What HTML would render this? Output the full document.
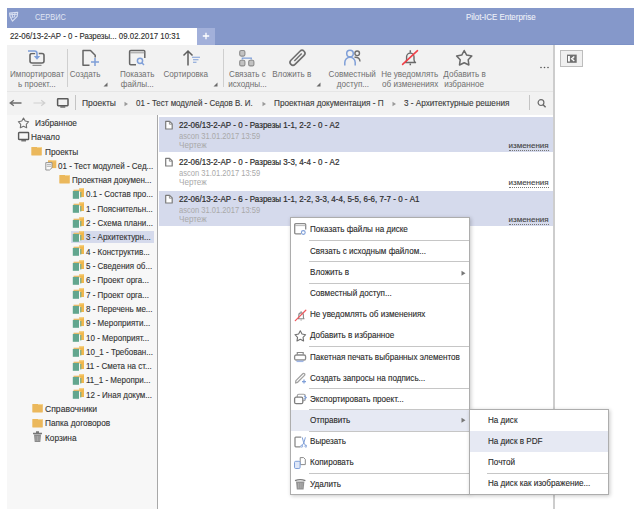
<!DOCTYPE html>
<html><head><meta charset="utf-8"><style>
html,body{margin:0;padding:0;}
body{width:639px;height:516px;overflow:hidden;position:relative;background:#fff;font-family:"Liberation Sans", sans-serif;font-size:9px;}
.r{position:absolute;display:block;}
.t{position:absolute;white-space:nowrap;transform-origin:0 50%;}
.c{position:absolute;white-space:nowrap;text-align:center;line-height:13px;font-size:9px;}
</style></head><body>
<div class="r" style="left:7px;top:8px;width:627px;height:37px;background:#8598ca;"></div>
<svg class="r" style="left:8px;top:11px;" width="12" height="12" viewBox="0 0 12 12"><path d="M1.6 2.1 L9.7 1.3 L9.2 5.3 L4.5 10.2 L2 5.2 Z" fill="none" stroke="#d9e0f2" stroke-width="1.1" stroke-linejoin="round"/><path d="M2 3.8 L9.4 3.2 M4 2 L4.6 6.5 M7 1.6 L6.6 6" stroke="#d9e0f2" stroke-width="1"/><path d="M3.2 6.3 L6.8 6" stroke="#d9e0f2" stroke-width=".8"/></svg>
<div class="t" style="left:35px;top:10.50px;font-size:8.5px;line-height:12px;color:#e0e6f4;font-weight:normal;transform:scaleX(0.87);">СЕРВИС</div>
<div class="t" style="left:465.7px;top:10.70px;font-size:9px;line-height:12px;color:#eef1f9;font-weight:normal;transform:scaleX(0.88);-webkit-text-stroke:0.1px #eef1f9;">Pilot-ICE Enterprise</div>
<div class="r" style="left:7px;top:28px;width:190px;height:17px;background:#ffffff;"></div>
<div class="t" style="left:9.7px;top:30.00px;font-size:9px;line-height:12px;color:#2b2b2b;font-weight:normal;transform:scaleX(0.873);-webkit-text-stroke:0.12px #2b2b2b;">22-06/13-2-АР - 0 - Разрезы... 09.02.2017 10:31</div>
<div class="r" style="left:215px;top:44px;width:419px;height:1px;background:#7d92c6;"></div>
<div class="r" style="left:197px;top:28px;width:18px;height:17px;background:#a2b0da;"></div>
<svg class="r" style="left:201px;top:31px;" width="10" height="10" viewBox="0 0 10 10"><path d="M5 1.8 V8.2 M1.8 5 H8.2" stroke="#fff" stroke-width="1.3"/></svg>
<div class="r" style="left:7px;top:45px;width:546px;height:46px;background:#f2f2f2;"></div>
<div class="r" style="left:7px;top:91px;width:546px;height:23.5px;background:#f2f2f2;border-top:1px solid #e6e6e6;box-sizing:border-box;"></div>
<div class="r" style="left:66.5px;top:48.5px;width:1px;height:38px;background:#cfcfcf;"></div>
<div class="r" style="left:222.5px;top:48.5px;width:1px;height:38px;background:#cfcfcf;"></div>
<div class="c" style="left:-23px;top:67.50px;width:120px;color:#707070"><span style="display:inline-block;transform:scaleX(.9)">Импортироват</span></div>
<div class="c" style="left:-23px;top:77.50px;width:120px;color:#707070"><span style="display:inline-block;transform:scaleX(.9)">ь проект...</span></div>
<div class="c" style="left:25px;top:67.50px;width:120px;color:#707070"><span style="display:inline-block;transform:scaleX(.9)">Создать</span></div>
<div class="c" style="left:77px;top:67.50px;width:120px;color:#707070"><span style="display:inline-block;transform:scaleX(.9)">Показать</span></div>
<div class="c" style="left:77px;top:77.50px;width:120px;color:#707070"><span style="display:inline-block;transform:scaleX(.9)">файлы...</span></div>
<div class="c" style="left:126px;top:67.50px;width:120px;color:#707070"><span style="display:inline-block;transform:scaleX(.9)">Сортировка</span></div>
<div class="c" style="left:187px;top:67.50px;width:120px;color:#707070"><span style="display:inline-block;transform:scaleX(.9)">Связать с</span></div>
<div class="c" style="left:187px;top:77.50px;width:120px;color:#707070"><span style="display:inline-block;transform:scaleX(.9)">исходны...</span></div>
<div class="c" style="left:232px;top:67.50px;width:120px;color:#707070"><span style="display:inline-block;transform:scaleX(.9)">Вложить в</span></div>
<div class="c" style="left:292.5px;top:67.50px;width:120px;color:#707070"><span style="display:inline-block;transform:scaleX(.9)">Совместный</span></div>
<div class="c" style="left:292.5px;top:77.50px;width:120px;color:#707070"><span style="display:inline-block;transform:scaleX(.9)">доступ...</span></div>
<div class="c" style="left:350px;top:67.50px;width:120px;color:#707070"><span style="display:inline-block;transform:scaleX(.9)">Не уведомлять</span></div>
<div class="c" style="left:350px;top:77.50px;width:120px;color:#707070"><span style="display:inline-block;transform:scaleX(.9)">об изменениях</span></div>
<div class="c" style="left:404.5px;top:67.50px;width:120px;color:#707070"><span style="display:inline-block;transform:scaleX(.9)">Добавить в</span></div>
<div class="c" style="left:404.5px;top:77.50px;width:120px;color:#707070"><span style="display:inline-block;transform:scaleX(.9)">избранное</span></div>
<svg class="r" style="left:102.5px;top:81.5px;" width="5" height="5" viewBox="0 0 5 5"><path d="M4.5 0.5 V4.5 H0.5 Z" fill="#6a6a6a"/></svg>
<svg class="r" style="left:212.5px;top:81.5px;" width="5" height="5" viewBox="0 0 5 5"><path d="M4.5 0.5 V4.5 H0.5 Z" fill="#6a6a6a"/></svg>
<svg class="r" style="left:315.5px;top:81.5px;" width="5" height="5" viewBox="0 0 5 5"><path d="M4.5 0.5 V4.5 H0.5 Z" fill="#6a6a6a"/></svg>
<svg class="r" style="left:540px;top:66px;" width="9" height="3" viewBox="0 0 9 3"><circle cx="1" cy="1.5" r=".8" fill="#555"/><circle cx="4.5" cy="1.5" r=".8" fill="#555"/><circle cx="8" cy="1.5" r=".8" fill="#555"/></svg>
<svg class="r" style="left:27px;top:49px;" width="20" height="18" viewBox="0 0 20 18"><rect x="3" y="4.5" width="14" height="9.5" rx="2" fill="none" stroke="#666" stroke-width="1.6"/><path d="M5.5 16.3 H14.5" stroke="#777" stroke-width="1"/><path d="M1 2 H7.5 Q10 2 10 4.5 V8" fill="none" stroke="#f2f2f2" stroke-width="3.6"/><path d="M1 2 H7.5 Q10 2 10 4.5 V8" fill="none" stroke="#7f9fd8" stroke-width="1.6"/><path d="M6.8 7 L10 10.8 L13.2 7 Z" fill="#7f9fd8"/></svg>
<svg class="r" style="left:81px;top:49px;" width="19" height="18" viewBox="0 0 19 18"><path d="M8.5 16.2 H2 V1.5 H9.5 L14.2 6.2 V8.5" fill="none" stroke="#666" stroke-width="1.5" stroke-linejoin="round"/><path d="M14 9 V17 M10 13 H18" stroke="#7f9fd8" stroke-width="1.5"/></svg>
<svg class="r" style="left:127px;top:49px;" width="20" height="18" viewBox="0 0 20 18"><path d="M9 15.7 H3.8 Q2.6 15.7 2.6 14.5 V2.6 Q2.6 1.6 3.8 1.6 H16.8 Q17.8 1.6 17.8 2.6 V9" fill="none" stroke="#666" stroke-width="1.5"/><path d="M3 3.8 H17.5" stroke="#999" stroke-width="1"/><circle cx="13" cy="11.8" r="2.6" fill="none" stroke="#7f9fd8" stroke-width="1.5"/><path d="M14.8 13.8 L17 16" stroke="#7f9fd8" stroke-width="1.5"/></svg>
<svg class="r" style="left:180px;top:49px;" width="22" height="18" viewBox="0 0 22 18"><path d="M8 16.5 V2 M3.5 6.5 L8 2 L12.5 6.5" fill="none" stroke="#5f5f5f" stroke-width="1.5"/><path d="M12 8.3 H20 M13 10.8 H18.5 M13 13.3 H16.5" stroke="#7f9fd8" stroke-width="1.1"/></svg>
<svg class="r" style="left:237px;top:48px;" width="20" height="20" viewBox="0 0 20 20"><rect x="2.7" y="2.5" width="5.2" height="5.6" rx="1.5" fill="#c2c2c2" stroke="#8c8c8c" stroke-width="1.1"/><rect x="2.7" y="12.3" width="5.2" height="5.6" rx="1.5" fill="#c2c2c2" stroke="#8c8c8c" stroke-width="1.1"/><rect x="11.7" y="12.3" width="5.2" height="5.6" rx="1.5" fill="#c2c2c2" stroke="#8c8c8c" stroke-width="1.1"/><path d="M5.3 10.2 H14.3 M5.3 9.5 V11.5 M14.3 9.5 V11.5" fill="none" stroke="#7f9fd8" stroke-width="1.2"/></svg>
<svg class="r" style="left:285px;top:46px;" width="25" height="24" viewBox="0 0 25 24"><g transform="translate(12.5,11.8) rotate(45)"><rect x="-2.9" y="-9.3" width="5.8" height="18.6" rx="2.9" fill="none" stroke="#6e6e6e" stroke-width="1.6"/><path d="M0 -6 V4.5" stroke="#6e6e6e" stroke-width="1.4"/></g></svg>
<svg class="r" style="left:338px;top:46px;" width="30" height="24" viewBox="0 0 30 24"><circle cx="12" cy="7.5" r="3.3" fill="none" stroke="#7f9fd8" stroke-width="1.5"/><path d="M6.8 19.5 V16.5 A5.2 5.2 0 0 1 17.2 16.5 V19.5" fill="none" stroke="#7f9fd8" stroke-width="1.5"/><circle cx="19.2" cy="7.3" r="2.3" fill="none" stroke="#6e6e6e" stroke-width="1.4"/><path d="M16.5 11.3 C20 11 22 12.5 22 15.5" fill="none" stroke="#6e6e6e" stroke-width="1.4"/></svg>
<svg class="r" style="left:398px;top:46px;" width="24" height="24" viewBox="0 0 24 24"><path d="M7.5 16.5 Q8.6 15.5 8.6 13.5 V10.8 A3.7 3.7 0 0 1 16 10.8 V13.5 Q16 15.5 17.5 16.5 Z" fill="none" stroke="#6a6a6a" stroke-width="1.4" stroke-linejoin="round"/><path d="M12.3 4.3 V6.8 M12.3 17.5 V19.2" stroke="#6a6a6a" stroke-width="1.5"/><path d="M4.6 18.4 L19.5 4.7" stroke="#f04048" stroke-width="1.6" stroke-linecap="round"/></svg>
<svg class="r" style="left:453px;top:48px;" width="22" height="20" viewBox="0 0 22 20"><polygon points="11.20,2.50 13.67,7.10 18.81,8.03 15.19,11.80 15.90,16.97 11.20,14.70 6.50,16.97 7.21,11.80 3.59,8.03 8.73,7.10" fill="none" stroke="#6a6a6a" stroke-width="1.5" stroke-linejoin="round"/></svg>
<div class="r" style="left:553px;top:45px;width:1.5px;height:464px;background:#cdcdcd;"></div>
<div class="r" style="left:560px;top:50px;width:23px;height:17px;background:#f0f0f0;border:1px solid #bdbdbd;box-sizing:border-box;"></div>
<svg class="r" style="left:566px;top:53.5px;" width="12" height="10" viewBox="0 0 12 10"><rect x="1" y="0.6" width="9.7" height="8.2" fill="#707070"/><rect x="2" y="2" width="1.9" height="5.5" fill="#fff"/><path d="M8.3 2.4 L5.6 4.7 L8.3 7" stroke="#fff" stroke-width="1.3" fill="none"/><path d="M6 4.7 H7.5" stroke="#ddd" stroke-width="1"/></svg>
<svg class="r" style="left:9px;top:97px;" width="14" height="12" viewBox="0 0 14 12"><path d="M1.2 6 H12.5 M4.8 3.3 L1.2 6 L4.8 8.7" fill="none" stroke="#6e6e6e" stroke-width="1.3"/></svg>
<svg class="r" style="left:32px;top:97px;" width="14" height="12" viewBox="0 0 14 12"><path d="M1.5 6 H12.8 M9.2 3.3 L12.8 6 L9.2 8.7" fill="none" stroke="#d0d0d0" stroke-width="1.2"/></svg>
<svg class="r" style="left:56px;top:96px;" width="14" height="13" viewBox="0 0 14 13"><rect x="1.6" y="2.7" width="10.4" height="7" rx=".6" fill="none" stroke="#5a5a5a" stroke-width="1.5"/><path d="M4.3 11 H9.3" stroke="#5a5a5a" stroke-width="1.3"/></svg>
<div class="r" style="left:75px;top:94.5px;width:1px;height:15.5px;background:#c4c4c4;"></div>
<div class="t" style="left:81.7px;top:96.50px;font-size:9px;line-height:12px;color:#3a3a3a;font-weight:normal;transform:scaleX(0.94);-webkit-text-stroke:0.12px #3a3a3a;">Проекты</div>
<div class="t" style="left:136px;top:96.50px;font-size:9px;line-height:12px;color:#3a3a3a;font-weight:normal;transform:scaleX(0.885);-webkit-text-stroke:0.12px #3a3a3a;">01 - Тест модулей - Седов В. И.</div>
<div class="t" style="left:273.7px;top:96.50px;font-size:9px;line-height:12px;color:#3a3a3a;font-weight:normal;transform:scaleX(0.91);-webkit-text-stroke:0.12px #3a3a3a;">Проектная документация - П</div>
<div class="t" style="left:404.4px;top:96.50px;font-size:9px;line-height:12px;color:#3a3a3a;font-weight:normal;transform:scaleX(0.907);-webkit-text-stroke:0.12px #3a3a3a;">3 - Архитектурные решения</div>
<svg class="r" style="left:123.5px;top:100.5px;" width="5" height="6" viewBox="0 0 5 6"><path d="M0.5 0.8 L4 3 L0.5 5.2 Z" fill="#999"/></svg>
<svg class="r" style="left:261.5px;top:100.5px;" width="5" height="6" viewBox="0 0 5 6"><path d="M0.5 0.8 L4 3 L0.5 5.2 Z" fill="#999"/></svg>
<svg class="r" style="left:391.5px;top:100.5px;" width="5" height="6" viewBox="0 0 5 6"><path d="M0.5 0.8 L4 3 L0.5 5.2 Z" fill="#999"/></svg>
<div class="r" style="left:529px;top:95px;width:1px;height:15px;background:#c4c4c4;"></div>
<svg class="r" style="left:536px;top:98px;" width="12" height="10" viewBox="0 0 12 10"><circle cx="5" cy="4.6" r="2.9" fill="none" stroke="#6a6a6a" stroke-width="1.2"/><path d="M7.1 6.7 L9.6 9.2" stroke="#6a6a6a" stroke-width="1.5"/></svg>
<div class="r" style="left:7px;top:114.5px;width:150px;height:394.5px;background:#f7f7f7;"></div>
<div class="r" style="left:157px;top:114.5px;width:1px;height:394.5px;background:#a8a8a8;"></div>
<svg class="r" style="left:17px;top:116.6px;" width="13" height="12" viewBox="0 0 13 12"><polygon points="6.50,1.00 8.20,4.05 11.64,4.73 9.26,7.30 9.67,10.77 6.50,9.30 3.33,10.77 3.74,7.30 1.36,4.73 4.80,4.05" fill="none" stroke="#707070" stroke-width="1.1" stroke-linejoin="round"/></svg>
<div class="t" style="left:35px;top:116.90px;font-size:9px;line-height:12px;color:#333;font-weight:normal;transform:scaleX(0.92);-webkit-text-stroke:0.12px #333;">Избранное</div>
<svg class="r" style="left:17px;top:130.91px;" width="13" height="12" viewBox="0 0 13 12"><rect x="1.6" y="1.5" width="10" height="7" rx=".6" fill="none" stroke="#5a5a5a" stroke-width="1.4"/><path d="M4.3 9.8 H9" stroke="#5a5a5a" stroke-width="1.2"/></svg>
<div class="t" style="left:31px;top:131.21px;font-size:9px;line-height:12px;color:#333;font-weight:normal;transform:scaleX(0.92);-webkit-text-stroke:0.12px #333;">Начало</div>
<svg class="r" style="left:31px;top:145.72px;" width="12" height="10" viewBox="0 0 12 10"><rect x="0.3" y="1" width="10.5" height="8.4" rx=".4" fill="#ebb85c"/><rect x="6" y="1" width="4.5" height="0.9" fill="#f8d896"/></svg>
<div class="t" style="left:45px;top:145.52px;font-size:9px;line-height:12px;color:#333;font-weight:normal;transform:scaleX(0.92);-webkit-text-stroke:0.12px #333;">Проекты</div>
<svg class="r" style="left:45px;top:158.53px;" width="13" height="13" viewBox="0 0 13 13"><rect x="3" y="1.3" width="8.3" height="7.8" fill="#ebb85c"/><rect x="6.5" y="1.3" width="4.3" height="0.9" fill="#f8d896"/><path d="M0.8 3.6 H7 V8.8 L4.5 11 H0.8 Z" fill="#fafafa" stroke="#8a8a8a" stroke-width="0.9"/><path d="M1.8 5.6 H6 M1.8 7.3 H6" stroke="#a8a8a8" stroke-width="0.9"/></svg>
<div class="t" style="left:58.4px;top:159.83px;font-size:9px;line-height:12px;color:#333;font-weight:normal;transform:scaleX(0.89);-webkit-text-stroke:0.12px #333;">01 - Тест модулей - Сед...</div>
<svg class="r" style="left:58.8px;top:174.34px;" width="12" height="10" viewBox="0 0 12 10"><rect x="0.3" y="1" width="10.5" height="8.4" rx=".4" fill="#ebb85c"/><rect x="6" y="1" width="4.5" height="0.9" fill="#f8d896"/></svg>
<div class="t" style="left:72.3px;top:174.14px;font-size:9px;line-height:12px;color:#333;font-weight:normal;transform:scaleX(0.89);-webkit-text-stroke:0.12px #333;">Проектная докумен...</div>
<svg class="r" style="left:72px;top:187.14999999999998px;" width="14" height="14" viewBox="0 0 14 14"><rect x="7.3" y="1.2" width="4.7" height="8.8" fill="#f0b84e"/><rect x="8" y="1.3" width="3.5" height="1" fill="#f8d68e"/><rect x="1.5" y="2.7" width="6" height="1.5" fill="#e6bb6a"/><rect x="0.8" y="4" width="6.2" height="7.8" fill="#62a68e"/><rect x="7" y="4.5" width="1.3" height="6.5" fill="#f4f8f6"/><rect x="8.3" y="5" width="1" height="5.5" fill="#62a68e"/></svg>
<div class="t" style="left:86.3px;top:188.45px;font-size:9px;line-height:12px;color:#333;font-weight:normal;transform:scaleX(0.89);-webkit-text-stroke:0.12px #333;">0.1 - Состав про...</div>
<svg class="r" style="left:72px;top:201.45999999999998px;" width="14" height="14" viewBox="0 0 14 14"><rect x="7.3" y="1.2" width="4.7" height="8.8" fill="#f0b84e"/><rect x="8" y="1.3" width="3.5" height="1" fill="#f8d68e"/><rect x="1.5" y="2.7" width="6" height="1.5" fill="#e6bb6a"/><rect x="0.8" y="4" width="6.2" height="7.8" fill="#62a68e"/><rect x="7" y="4.5" width="1.3" height="6.5" fill="#f4f8f6"/><rect x="8.3" y="5" width="1" height="5.5" fill="#62a68e"/></svg>
<div class="t" style="left:86.3px;top:202.76px;font-size:9px;line-height:12px;color:#333;font-weight:normal;transform:scaleX(0.89);-webkit-text-stroke:0.12px #333;">1 - Пояснительн...</div>
<svg class="r" style="left:72px;top:215.76999999999998px;" width="14" height="14" viewBox="0 0 14 14"><rect x="7.3" y="1.2" width="4.7" height="8.8" fill="#f0b84e"/><rect x="8" y="1.3" width="3.5" height="1" fill="#f8d68e"/><rect x="1.5" y="2.7" width="6" height="1.5" fill="#e6bb6a"/><rect x="0.8" y="4" width="6.2" height="7.8" fill="#62a68e"/><rect x="7" y="4.5" width="1.3" height="6.5" fill="#f4f8f6"/><rect x="8.3" y="5" width="1" height="5.5" fill="#62a68e"/></svg>
<div class="t" style="left:86.3px;top:217.07px;font-size:9px;line-height:12px;color:#333;font-weight:normal;transform:scaleX(0.89);-webkit-text-stroke:0.12px #333;">2 - Схема плани...</div>
<div class="r" style="left:71px;top:230.77999999999997px;width:82.6px;height:12.3px;background:#d5daec;"></div>
<svg class="r" style="left:72px;top:230.07999999999998px;" width="14" height="14" viewBox="0 0 14 14"><rect x="7.3" y="1.2" width="4.7" height="8.8" fill="#f0b84e"/><rect x="8" y="1.3" width="3.5" height="1" fill="#f8d68e"/><rect x="1.5" y="2.7" width="6" height="1.5" fill="#e6bb6a"/><rect x="0.8" y="4" width="6.2" height="7.8" fill="#62a68e"/><rect x="7" y="4.5" width="1.3" height="6.5" fill="#f4f8f6"/><rect x="8.3" y="5" width="1" height="5.5" fill="#62a68e"/></svg>
<div class="t" style="left:86.3px;top:231.38px;font-size:9px;line-height:12px;color:#333;font-weight:normal;transform:scaleX(0.89);-webkit-text-stroke:0.12px #333;">3 - Архитектурн...</div>
<svg class="r" style="left:72px;top:244.39px;" width="14" height="14" viewBox="0 0 14 14"><rect x="7.3" y="1.2" width="4.7" height="8.8" fill="#f0b84e"/><rect x="8" y="1.3" width="3.5" height="1" fill="#f8d68e"/><rect x="1.5" y="2.7" width="6" height="1.5" fill="#e6bb6a"/><rect x="0.8" y="4" width="6.2" height="7.8" fill="#62a68e"/><rect x="7" y="4.5" width="1.3" height="6.5" fill="#f4f8f6"/><rect x="8.3" y="5" width="1" height="5.5" fill="#62a68e"/></svg>
<div class="t" style="left:86.3px;top:245.69px;font-size:9px;line-height:12px;color:#333;font-weight:normal;transform:scaleX(0.89);-webkit-text-stroke:0.12px #333;">4 - Конструктив...</div>
<svg class="r" style="left:72px;top:258.7px;" width="14" height="14" viewBox="0 0 14 14"><rect x="7.3" y="1.2" width="4.7" height="8.8" fill="#f0b84e"/><rect x="8" y="1.3" width="3.5" height="1" fill="#f8d68e"/><rect x="1.5" y="2.7" width="6" height="1.5" fill="#e6bb6a"/><rect x="0.8" y="4" width="6.2" height="7.8" fill="#62a68e"/><rect x="7" y="4.5" width="1.3" height="6.5" fill="#f4f8f6"/><rect x="8.3" y="5" width="1" height="5.5" fill="#62a68e"/></svg>
<div class="t" style="left:86.3px;top:260.00px;font-size:9px;line-height:12px;color:#333;font-weight:normal;transform:scaleX(0.89);-webkit-text-stroke:0.12px #333;">5 - Сведения об...</div>
<svg class="r" style="left:72px;top:273.01px;" width="14" height="14" viewBox="0 0 14 14"><rect x="7.3" y="1.2" width="4.7" height="8.8" fill="#f0b84e"/><rect x="8" y="1.3" width="3.5" height="1" fill="#f8d68e"/><rect x="1.5" y="2.7" width="6" height="1.5" fill="#e6bb6a"/><rect x="0.8" y="4" width="6.2" height="7.8" fill="#62a68e"/><rect x="7" y="4.5" width="1.3" height="6.5" fill="#f4f8f6"/><rect x="8.3" y="5" width="1" height="5.5" fill="#62a68e"/></svg>
<div class="t" style="left:86.3px;top:274.31px;font-size:9px;line-height:12px;color:#333;font-weight:normal;transform:scaleX(0.89);-webkit-text-stroke:0.12px #333;">6 - Проект орга...</div>
<svg class="r" style="left:72px;top:287.32px;" width="14" height="14" viewBox="0 0 14 14"><rect x="7.3" y="1.2" width="4.7" height="8.8" fill="#f0b84e"/><rect x="8" y="1.3" width="3.5" height="1" fill="#f8d68e"/><rect x="1.5" y="2.7" width="6" height="1.5" fill="#e6bb6a"/><rect x="0.8" y="4" width="6.2" height="7.8" fill="#62a68e"/><rect x="7" y="4.5" width="1.3" height="6.5" fill="#f4f8f6"/><rect x="8.3" y="5" width="1" height="5.5" fill="#62a68e"/></svg>
<div class="t" style="left:86.3px;top:288.62px;font-size:9px;line-height:12px;color:#333;font-weight:normal;transform:scaleX(0.89);-webkit-text-stroke:0.12px #333;">7 - Проект орга...</div>
<svg class="r" style="left:72px;top:301.63px;" width="14" height="14" viewBox="0 0 14 14"><rect x="7.3" y="1.2" width="4.7" height="8.8" fill="#f0b84e"/><rect x="8" y="1.3" width="3.5" height="1" fill="#f8d68e"/><rect x="1.5" y="2.7" width="6" height="1.5" fill="#e6bb6a"/><rect x="0.8" y="4" width="6.2" height="7.8" fill="#62a68e"/><rect x="7" y="4.5" width="1.3" height="6.5" fill="#f4f8f6"/><rect x="8.3" y="5" width="1" height="5.5" fill="#62a68e"/></svg>
<div class="t" style="left:86.3px;top:302.93px;font-size:9px;line-height:12px;color:#333;font-weight:normal;transform:scaleX(0.89);-webkit-text-stroke:0.12px #333;">8 - Перечень ме...</div>
<svg class="r" style="left:72px;top:315.94px;" width="14" height="14" viewBox="0 0 14 14"><rect x="7.3" y="1.2" width="4.7" height="8.8" fill="#f0b84e"/><rect x="8" y="1.3" width="3.5" height="1" fill="#f8d68e"/><rect x="1.5" y="2.7" width="6" height="1.5" fill="#e6bb6a"/><rect x="0.8" y="4" width="6.2" height="7.8" fill="#62a68e"/><rect x="7" y="4.5" width="1.3" height="6.5" fill="#f4f8f6"/><rect x="8.3" y="5" width="1" height="5.5" fill="#62a68e"/></svg>
<div class="t" style="left:86.3px;top:317.24px;font-size:9px;line-height:12px;color:#333;font-weight:normal;transform:scaleX(0.89);-webkit-text-stroke:0.12px #333;">9 - Мероприяти...</div>
<svg class="r" style="left:72px;top:330.25px;" width="14" height="14" viewBox="0 0 14 14"><rect x="7.3" y="1.2" width="4.7" height="8.8" fill="#f0b84e"/><rect x="8" y="1.3" width="3.5" height="1" fill="#f8d68e"/><rect x="1.5" y="2.7" width="6" height="1.5" fill="#e6bb6a"/><rect x="0.8" y="4" width="6.2" height="7.8" fill="#62a68e"/><rect x="7" y="4.5" width="1.3" height="6.5" fill="#f4f8f6"/><rect x="8.3" y="5" width="1" height="5.5" fill="#62a68e"/></svg>
<div class="t" style="left:86.3px;top:331.55px;font-size:9px;line-height:12px;color:#333;font-weight:normal;transform:scaleX(0.89);-webkit-text-stroke:0.12px #333;">10 - Мероприят...</div>
<svg class="r" style="left:72px;top:344.56px;" width="14" height="14" viewBox="0 0 14 14"><rect x="7.3" y="1.2" width="4.7" height="8.8" fill="#f0b84e"/><rect x="8" y="1.3" width="3.5" height="1" fill="#f8d68e"/><rect x="1.5" y="2.7" width="6" height="1.5" fill="#e6bb6a"/><rect x="0.8" y="4" width="6.2" height="7.8" fill="#62a68e"/><rect x="7" y="4.5" width="1.3" height="6.5" fill="#f4f8f6"/><rect x="8.3" y="5" width="1" height="5.5" fill="#62a68e"/></svg>
<div class="t" style="left:86.3px;top:345.86px;font-size:9px;line-height:12px;color:#333;font-weight:normal;transform:scaleX(0.89);-webkit-text-stroke:0.12px #333;">10_1 - Требован...</div>
<svg class="r" style="left:72px;top:358.87px;" width="14" height="14" viewBox="0 0 14 14"><rect x="7.3" y="1.2" width="4.7" height="8.8" fill="#f0b84e"/><rect x="8" y="1.3" width="3.5" height="1" fill="#f8d68e"/><rect x="1.5" y="2.7" width="6" height="1.5" fill="#e6bb6a"/><rect x="0.8" y="4" width="6.2" height="7.8" fill="#62a68e"/><rect x="7" y="4.5" width="1.3" height="6.5" fill="#f4f8f6"/><rect x="8.3" y="5" width="1" height="5.5" fill="#62a68e"/></svg>
<div class="t" style="left:86.3px;top:360.17px;font-size:9px;line-height:12px;color:#333;font-weight:normal;transform:scaleX(0.89);-webkit-text-stroke:0.12px #333;">11 - Смета на ст...</div>
<svg class="r" style="left:72px;top:373.17999999999995px;" width="14" height="14" viewBox="0 0 14 14"><rect x="7.3" y="1.2" width="4.7" height="8.8" fill="#f0b84e"/><rect x="8" y="1.3" width="3.5" height="1" fill="#f8d68e"/><rect x="1.5" y="2.7" width="6" height="1.5" fill="#e6bb6a"/><rect x="0.8" y="4" width="6.2" height="7.8" fill="#62a68e"/><rect x="7" y="4.5" width="1.3" height="6.5" fill="#f4f8f6"/><rect x="8.3" y="5" width="1" height="5.5" fill="#62a68e"/></svg>
<div class="t" style="left:86.3px;top:374.48px;font-size:9px;line-height:12px;color:#333;font-weight:normal;transform:scaleX(0.89);-webkit-text-stroke:0.12px #333;">11_1 - Меропри...</div>
<svg class="r" style="left:72px;top:387.49px;" width="14" height="14" viewBox="0 0 14 14"><rect x="7.3" y="1.2" width="4.7" height="8.8" fill="#f0b84e"/><rect x="8" y="1.3" width="3.5" height="1" fill="#f8d68e"/><rect x="1.5" y="2.7" width="6" height="1.5" fill="#e6bb6a"/><rect x="0.8" y="4" width="6.2" height="7.8" fill="#62a68e"/><rect x="7" y="4.5" width="1.3" height="6.5" fill="#f4f8f6"/><rect x="8.3" y="5" width="1" height="5.5" fill="#62a68e"/></svg>
<div class="t" style="left:86.3px;top:388.79px;font-size:9px;line-height:12px;color:#333;font-weight:normal;transform:scaleX(0.89);-webkit-text-stroke:0.12px #333;">12 - Иная докум...</div>
<svg class="r" style="left:31.7px;top:403.29999999999995px;" width="12" height="10" viewBox="0 0 12 10"><rect x="0.3" y="1" width="10.5" height="8.4" rx=".4" fill="#ebb85c"/><rect x="6" y="1" width="4.5" height="0.9" fill="#f8d896"/></svg>
<div class="t" style="left:45px;top:403.10px;font-size:9px;line-height:12px;color:#333;font-weight:normal;transform:scaleX(0.955);-webkit-text-stroke:0.12px #333;">Справочники</div>
<svg class="r" style="left:31.7px;top:417.61px;" width="12" height="10" viewBox="0 0 12 10"><rect x="0.3" y="1" width="10.5" height="8.4" rx=".4" fill="#ebb85c"/><rect x="6" y="1" width="4.5" height="0.9" fill="#f8d896"/></svg>
<div class="t" style="left:45px;top:417.41px;font-size:9px;line-height:12px;color:#333;font-weight:normal;transform:scaleX(0.92);-webkit-text-stroke:0.12px #333;">Папка договоров</div>
<svg class="r" style="left:32px;top:431.41999999999996px;" width="11" height="12" viewBox="0 0 11 12"><path d="M1 2.5 H10 M4 1 H7" stroke="#777" stroke-width="1.3"/><path d="M2 3.5 H9 L8.3 11 H2.7 Z" fill="#8a8a8a"/><path d="M4 5 V10 M5.5 5 V10 M7 5 V10" stroke="#bbb" stroke-width=".6"/></svg>
<div class="t" style="left:45px;top:431.72px;font-size:9px;line-height:12px;color:#333;font-weight:normal;transform:scaleX(0.92);-webkit-text-stroke:0.12px #333;">Корзина</div>
<div class="r" style="left:159px;top:116.5px;width:394px;height:35.7px;background:#d5daec;"></div>
<svg class="r" style="left:164px;top:119.5px;" width="10" height="11" viewBox="0 0 10 11"><path d="M1.7 1.3 H5.6 L8.2 3.9 V9 H1.7 Z" fill="#fff" stroke="#7a7a7a" stroke-width="1.2" stroke-linejoin="round"/><path d="M5.4 1.5 V4.2 H8" fill="none" stroke="#8a8a8a" stroke-width=".9"/></svg>
<div class="t" style="left:178.6px;top:119.00px;font-size:9px;line-height:12px;color:#2e2e2e;font-weight:normal;transform:scaleX(0.89);-webkit-text-stroke:0.22px #2e2e2e;">22-06/13-2-АР - 0 - Разрезы 1-1, 2-2 - 0 - А2</div>
<div class="t" style="left:178.6px;top:129.60px;font-size:9px;line-height:12px;color:#a9a9a9;font-weight:normal;transform:scaleX(0.84);">ascon 31.01.2017 13:59</div>
<div class="t" style="left:178.6px;top:139.30px;font-size:9px;line-height:12px;color:#a9a9a9;font-weight:normal;transform:scaleX(0.9);">Чертеж</div>
<div class="t" style="left:508.5px;top:140.50px;font-size:8px;line-height:12px;color:#444;font-weight:normal;transform:scaleX(1.0);-webkit-text-stroke:0.12px #444;border-bottom:1px dotted #777;line-height:9px;">изменения</div>
<svg class="r" style="left:164px;top:156.5px;" width="10" height="11" viewBox="0 0 10 11"><path d="M1.7 1.3 H5.6 L8.2 3.9 V9 H1.7 Z" fill="#fff" stroke="#7a7a7a" stroke-width="1.2" stroke-linejoin="round"/><path d="M5.4 1.5 V4.2 H8" fill="none" stroke="#8a8a8a" stroke-width=".9"/></svg>
<div class="t" style="left:178.6px;top:156.00px;font-size:9px;line-height:12px;color:#2e2e2e;font-weight:normal;transform:scaleX(0.89);-webkit-text-stroke:0.22px #2e2e2e;">22-06/13-2-АР - 0 - Разрезы 3-3, 4-4 - 0 - А2</div>
<div class="t" style="left:178.6px;top:166.60px;font-size:9px;line-height:12px;color:#a9a9a9;font-weight:normal;transform:scaleX(0.84);">ascon 31.01.2017 13:59</div>
<div class="t" style="left:178.6px;top:176.30px;font-size:9px;line-height:12px;color:#a9a9a9;font-weight:normal;transform:scaleX(0.9);">Чертеж</div>
<div class="t" style="left:508.5px;top:177.50px;font-size:8px;line-height:12px;color:#444;font-weight:normal;transform:scaleX(1.0);-webkit-text-stroke:0.12px #444;border-bottom:1px dotted #777;line-height:9px;">изменения</div>
<div class="r" style="left:159px;top:190.5px;width:394px;height:35.7px;background:#d5daec;"></div>
<svg class="r" style="left:164px;top:193.5px;" width="10" height="11" viewBox="0 0 10 11"><path d="M1.7 1.3 H5.6 L8.2 3.9 V9 H1.7 Z" fill="#fff" stroke="#7a7a7a" stroke-width="1.2" stroke-linejoin="round"/><path d="M5.4 1.5 V4.2 H8" fill="none" stroke="#8a8a8a" stroke-width=".9"/></svg>
<div class="t" style="left:178.6px;top:193.00px;font-size:9px;line-height:12px;color:#2e2e2e;font-weight:normal;transform:scaleX(0.89);-webkit-text-stroke:0.22px #2e2e2e;">22-06/13-2-АР - 6 - Разрезы 1-1, 2-2, 3-3, 4-4, 5-5, 6-6, 7-7 - 0 - А1</div>
<div class="t" style="left:178.6px;top:203.60px;font-size:9px;line-height:12px;color:#a9a9a9;font-weight:normal;transform:scaleX(0.84);">ascon 31.01.2017 13:59</div>
<div class="t" style="left:178.6px;top:213.30px;font-size:9px;line-height:12px;color:#a9a9a9;font-weight:normal;transform:scaleX(0.9);">Чертеж</div>
<div class="t" style="left:508.5px;top:214.50px;font-size:8px;line-height:12px;color:#444;font-weight:normal;transform:scaleX(1.0);-webkit-text-stroke:0.12px #444;border-bottom:1px dotted #777;line-height:9px;">изменения</div>
<div class="r" style="left:290px;top:217px;width:180px;height:278.3px;background:#fff;border:1px solid #adadad;box-sizing:border-box;box-shadow:1px 1px 4px rgba(0,0,0,.22);"></div>
<div class="t" style="left:310px;top:223.10px;font-size:9px;line-height:12px;color:#2a2a2a;font-weight:normal;transform:scaleX(0.9);-webkit-text-stroke:0.12px #2a2a2a;">Показать файлы на диске</div>
<div class="r" style="left:309px;top:239.5px;width:160px;height:1px;background:#c6c6c6;"></div>
<div class="t" style="left:310px;top:244.50px;font-size:9px;line-height:12px;color:#2a2a2a;font-weight:normal;transform:scaleX(0.9);-webkit-text-stroke:0.12px #2a2a2a;">Связать с исходным файлом...</div>
<div class="r" style="left:309px;top:260.9px;width:160px;height:1px;background:#c6c6c6;"></div>
<div class="t" style="left:310px;top:266.10px;font-size:9px;line-height:12px;color:#2a2a2a;font-weight:normal;transform:scaleX(0.9);-webkit-text-stroke:0.12px #2a2a2a;">Вложить в</div>
<div class="r" style="left:309px;top:282.6px;width:160px;height:1px;background:#c6c6c6;"></div>
<div class="t" style="left:310px;top:287.40px;font-size:9px;line-height:12px;color:#2a2a2a;font-weight:normal;transform:scaleX(0.9);-webkit-text-stroke:0.12px #2a2a2a;">Совместный доступ...</div>
<div class="t" style="left:310px;top:308.10px;font-size:9px;line-height:12px;color:#2a2a2a;font-weight:normal;transform:scaleX(0.9);-webkit-text-stroke:0.12px #2a2a2a;">Не уведомлять об изменениях</div>
<div class="t" style="left:310px;top:329.10px;font-size:9px;line-height:12px;color:#2a2a2a;font-weight:normal;transform:scaleX(0.9);-webkit-text-stroke:0.12px #2a2a2a;">Добавить в избранное</div>
<div class="r" style="left:309px;top:346.0px;width:160px;height:1px;background:#c6c6c6;"></div>
<div class="t" style="left:310px;top:350.70px;font-size:9px;line-height:12px;color:#2a2a2a;font-weight:normal;transform:scaleX(0.9);-webkit-text-stroke:0.12px #2a2a2a;">Пакетная печать выбранных элементов</div>
<div class="t" style="left:310px;top:371.60px;font-size:9px;line-height:12px;color:#2a2a2a;font-weight:normal;transform:scaleX(0.9);-webkit-text-stroke:0.12px #2a2a2a;">Создать запросы на подпись...</div>
<div class="r" style="left:309px;top:387.8px;width:160px;height:1px;background:#c6c6c6;"></div>
<div class="t" style="left:310px;top:392.70px;font-size:9px;line-height:12px;color:#2a2a2a;font-weight:normal;transform:scaleX(0.9);-webkit-text-stroke:0.12px #2a2a2a;">Экспортировать проект...</div>
<div class="r" style="left:309px;top:409.0px;width:160px;height:1px;background:#c6c6c6;"></div>
<div class="r" style="left:291px;top:409.5px;width:178px;height:21.5px;background:#e6e9f3;"></div>
<div class="t" style="left:310px;top:413.90px;font-size:9px;line-height:12px;color:#2a2a2a;font-weight:normal;transform:scaleX(0.9);-webkit-text-stroke:0.12px #2a2a2a;">Отправить</div>
<div class="r" style="left:309px;top:430.5px;width:160px;height:1px;background:#c6c6c6;"></div>
<div class="t" style="left:310px;top:435.40px;font-size:9px;line-height:12px;color:#2a2a2a;font-weight:normal;transform:scaleX(0.9);-webkit-text-stroke:0.12px #2a2a2a;">Вырезать</div>
<div class="t" style="left:310px;top:456.30px;font-size:9px;line-height:12px;color:#2a2a2a;font-weight:normal;transform:scaleX(0.9);-webkit-text-stroke:0.12px #2a2a2a;">Копировать</div>
<div class="r" style="left:309px;top:473.2px;width:160px;height:1px;background:#c6c6c6;"></div>
<div class="t" style="left:310px;top:477.60px;font-size:9px;line-height:12px;color:#2a2a2a;font-weight:normal;transform:scaleX(0.9);-webkit-text-stroke:0.12px #2a2a2a;">Удалить</div>
<svg class="r" style="left:461px;top:269.6px;" width="6" height="7" viewBox="0 0 6 7"><path d="M0.5 0.8 L4.5 3.3 L0.5 5.8 Z" fill="#777"/></svg>
<svg class="r" style="left:461px;top:417.4px;" width="6" height="7" viewBox="0 0 6 7"><path d="M0.5 0.8 L4.5 3.3 L0.5 5.8 Z" fill="#777"/></svg>
<svg class="r" style="left:293px;top:222.3px;" width="14" height="14" viewBox="0 0 14 14"><path d="M8 11.8 H2.8 Q1.7 11.8 1.7 10.7 V2.8 Q1.7 1.7 2.8 1.7 H11.6 Q12.7 1.7 12.7 2.8 V7.5" fill="none" stroke="#8a8a8a" stroke-width="1.3"/><path d="M2 3.6 H12.4" stroke="#b0b0b0" stroke-width=".9"/><circle cx="10.3" cy="10.5" r="1.9" fill="none" stroke="#7f9fd8" stroke-width="1.1"/></svg>
<svg class="r" style="left:293px;top:307.5px;" width="14" height="14" viewBox="0 0 14 14"><path d="M5.2 10.8 Q5.8 10.2 5.8 9 V7.2 A2.3 2.3 0 0 1 10.4 7.2 V9 Q10.4 10.2 11 10.8 Z" fill="none" stroke="#8a8a8a" stroke-width="1.1" stroke-linejoin="round"/><path d="M8.1 3.2 V4.8 M8.1 11.5 V12.6" stroke="#8a8a8a" stroke-width="1.1"/><path d="M2.3 12.6 L12.8 2.3" stroke="#f0575d" stroke-width="1.3" stroke-linecap="round"/></svg>
<svg class="r" style="left:293px;top:328.5px;" width="14" height="14" viewBox="0 0 14 14"><polygon points="7.30,1.80 9.00,5.05 12.63,5.67 10.06,8.30 10.59,11.93 7.30,10.30 4.01,11.93 4.54,8.30 1.97,5.67 5.60,5.05" fill="none" stroke="#707070" stroke-width="1.1" stroke-linejoin="round"/></svg>
<svg class="r" style="left:293px;top:350.3px;" width="14" height="14" viewBox="0 0 14 14"><path d="M4.3 4.8 V2.5 H10.2 V4.8" fill="none" stroke="#8a8a8a" stroke-width="1.2"/><rect x="1.6" y="5" width="11" height="5" rx="1.6" fill="none" stroke="#8a8a8a" stroke-width="1.3"/><path d="M3.5 11.3 H10.5" stroke="#9fb6e6" stroke-width="1.6"/></svg>
<svg class="r" style="left:293px;top:370.6px;" width="14" height="14" viewBox="0 0 14 14"><path d="M2.6 12 L2.9 9.6 L9.8 2.7 A1.2 1.2 0 0 1 11.5 4.4 L4.6 11.3 Z" fill="none" stroke="#a2a2a2" stroke-width="1.3" stroke-linejoin="round"/><path d="M11 8.6 V12.6 M9 10.6 H13" stroke="#7f9fd8" stroke-width="1.2"/></svg>
<svg class="r" style="left:293px;top:392.1px;" width="14" height="14" viewBox="0 0 14 14"><rect x="4.3" y="2.3" width="8" height="6.5" rx="1.5" fill="none" stroke="#a0a0a0" stroke-width="1.1"/><rect x="1.6" y="5.2" width="8.2" height="6.5" rx="1.5" fill="#fff" stroke="#7e7e7e" stroke-width="1.3"/><path d="M11 3.8 L13.2 5.6 L11 7.4" fill="none" stroke="#7f9fd8" stroke-width="1.1"/></svg>
<svg class="r" style="left:293px;top:435px;" width="14" height="14" viewBox="0 0 14 14"><path d="M8.2 2.2 H2.8 Q2 2.2 2 3 V11 Q2 11.8 2.8 11.8 H7.5" fill="none" stroke="#8a8a8a" stroke-width="1.3"/><path d="M9.2 2.3 L10.8 8 L12.4 2.3 M10.8 8 L9 10.5 M10.8 8 L12.6 10.5" fill="none" stroke="#7f9fd8" stroke-width="1"/><circle cx="8.7" cy="11.2" r="1" fill="none" stroke="#7f9fd8" stroke-width=".9"/><circle cx="12.9" cy="11.2" r="1" fill="none" stroke="#7f9fd8" stroke-width=".9"/></svg>
<svg class="r" style="left:293px;top:456px;" width="14" height="14" viewBox="0 0 14 14"><path d="M7.2 1.6 H10.6 L12.3 3.3 V8.6 H7.2 Z" fill="#fff" stroke="#8a8a8a" stroke-width="1" stroke-linejoin="round"/><rect x="1.5" y="5.3" width="5.6" height="7.2" rx="1.2" fill="#dfe7f7" stroke="#7f9fd8" stroke-width="1"/></svg>
<svg class="r" style="left:293px;top:477px;" width="14" height="14" viewBox="0 0 14 14"><path d="M2 3.6 Q7.2 1.6 12.4 3.6" fill="none" stroke="#7a7a7a" stroke-width="1.3"/><path d="M3 4.6 H11.4 L10.6 12.6 H3.8 Z" fill="#929292"/><path d="M5.4 6 V11.3 M7.2 6 V11.3 M9 6 V11.3" stroke="#c4c4c4" stroke-width=".6"/></svg>
<div class="r" style="left:468.5px;top:408.5px;width:140px;height:86px;background:#fff;border:1px solid #adadad;box-sizing:border-box;box-shadow:1px 1px 4px rgba(0,0,0,.22);"></div>
<div class="t" style="left:487.6px;top:414.05px;font-size:9px;line-height:12px;color:#2a2a2a;font-weight:normal;transform:scaleX(0.9);-webkit-text-stroke:0.12px #2a2a2a;">На диск</div>
<div class="r" style="left:469.5px;top:431.1px;width:138px;height:20.6px;background:#e6e9f3;"></div>
<div class="t" style="left:487.6px;top:435.15px;font-size:9px;line-height:12px;color:#2a2a2a;font-weight:normal;transform:scaleX(0.9);-webkit-text-stroke:0.12px #2a2a2a;">На диск в PDF</div>
<div class="t" style="left:487.6px;top:456.25px;font-size:9px;line-height:12px;color:#2a2a2a;font-weight:normal;transform:scaleX(0.9);-webkit-text-stroke:0.12px #2a2a2a;">Почтой</div>
<div class="r" style="left:487px;top:472.8px;width:120.5px;height:1px;background:#c6c6c6;"></div>
<div class="t" style="left:487.6px;top:477.35px;font-size:9px;line-height:12px;color:#2a2a2a;font-weight:normal;transform:scaleX(0.9);-webkit-text-stroke:0.12px #2a2a2a;">На диск как изображение...</div>
</body></html>
